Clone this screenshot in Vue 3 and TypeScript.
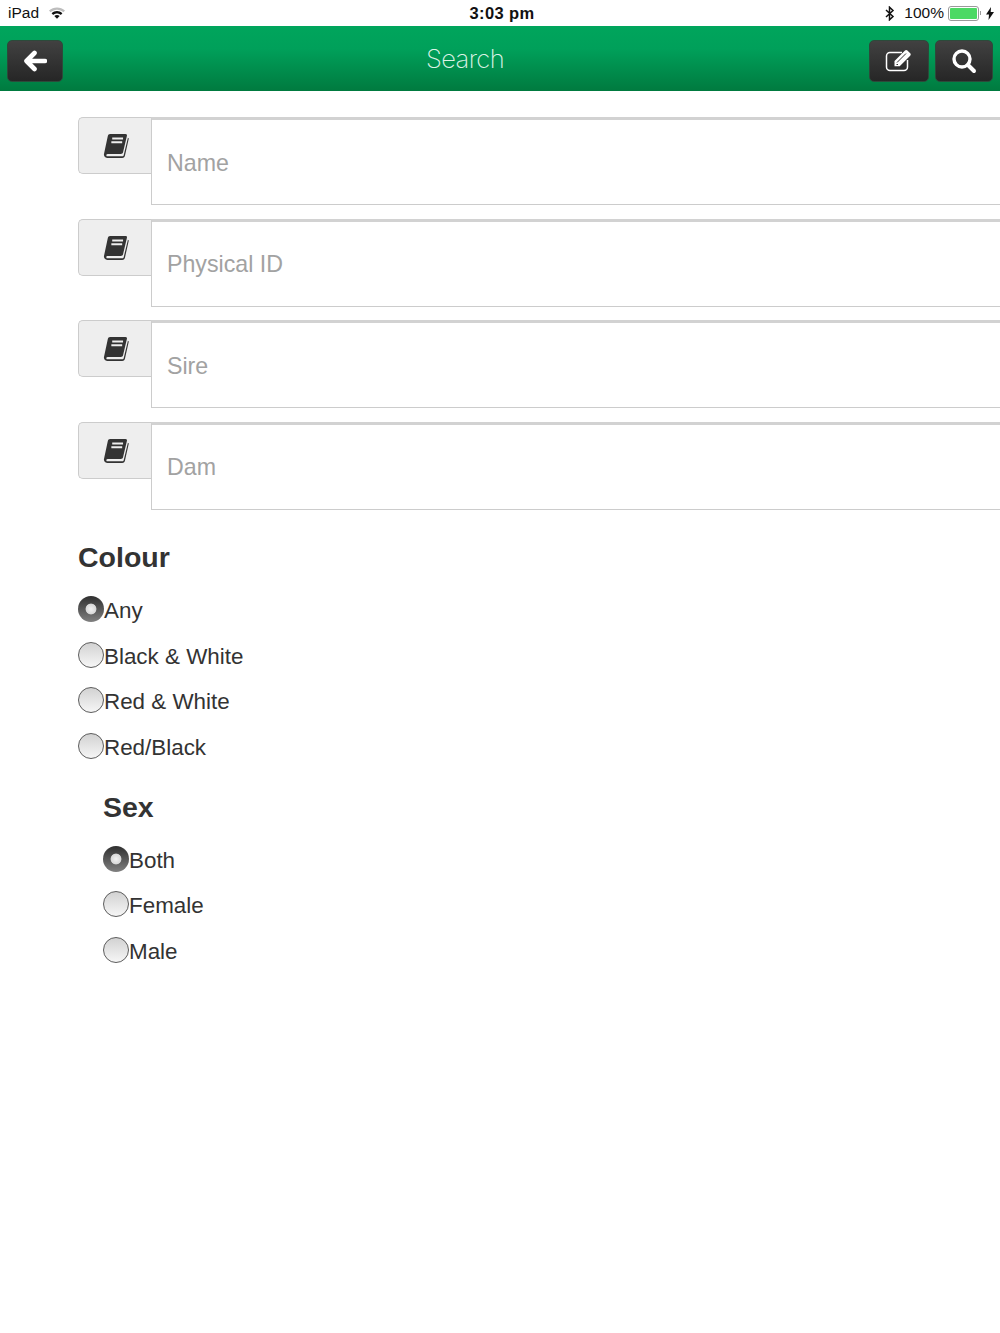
<script setup lang="ts">
const fields = ['Name', 'Physical ID', 'Sire', 'Dam']
const colours = ['Any', 'Black & White', 'Red & White', 'Red/Black']
const sexes = ['Both', 'Female', 'Male']
</script>

<template>
  <div class="page">
    <div class="status">
      <div class="status__side">
        <span>iPad</span>
        <svg class="wifi" width="18" height="14" viewBox="0 0 18 14">
          <path d="M1 4.600C5.500.4 12.500.4 17 4.600l-1.600 1.700C11.700 2.900 6.300 2.900 2.600 6.300z" fill="#bdbdbd" />
          <path d="M3.600 7.200c3.100-2.800 7.700-2.800 10.800 0l-1.600 1.700c-2.200-2-5.400-2-7.600 0z" fill="#111" />
          <path d="M6.300 9.900c1.600-1.300 3.800-1.300 5.400 0L9 12.800z" fill="#111" />
        </svg>
      </div>
      <span class="status__time">3:03 pm</span>
      <div class="status__side status__side--right">
        <svg width="10" height="15" viewBox="0 0 10 15" fill="none" stroke="#111" stroke-width="1.500">
          <path d="M1 4l7 6.500-3.500 3.300V1.200L8 4.500 1 11" />
        </svg>
        <span class="status__pct">100%</span>
        <span class="battery"><span class="battery__fill"></span></span>
        <span class="battery__tip"></span>
        <svg class="bolt" width="8" height="13" viewBox="0 0 8 13">
          <path d="M5 0L0 7.500h3L2.500 13 8 5H4.700z" fill="#111" />
        </svg>
      </div>
    </div>

    <header class="navbar">
      <button class="nav-btn nav-btn--back" type="button" aria-label="Back">
        <svg width="24" height="22" viewBox="0 0 24 22" fill="none" stroke="#fff" stroke-width="4.600" stroke-linecap="round" stroke-linejoin="round">
          <path d="M11.500 3L3.500 11l8 8M4 11h18" />
        </svg>
      </button>
      <h1 class="navbar__title">Search</h1>
      <div class="navbar__actions">
        <button class="nav-btn nav-btn--edit" type="button" aria-label="Edit">
          <svg class="edit-icon" width="28" height="24" viewBox="0 0 28 24" fill="none">
            <path d="M17 4.500H5a3.500 3.500 0 0 0-3.500 3.500v11a3.500 3.500 0 0 0 3.500 3.500h14a3.500 3.500 0 0 0 3.500-3.500v-7" stroke="#fff" stroke-width="1.500" />
            <path d="M9.500 13L20 2.500c.7-.7 1.700-.7 2.400 0l2.800 2.800c.7.700.7 1.700 0 2.400L14.700 18.200H9.500z" fill="#fff" />
            <path d="M12 14.500L21 5.500M11.500 16.500h1.500" stroke="#333" stroke-width="1" />
          </svg>
        </button>
        <button class="nav-btn nav-btn--search" type="button" aria-label="Search">
          <svg width="26" height="26" viewBox="0 0 26 26" fill="none" stroke="#fff" stroke-linecap="round">
            <circle cx="11" cy="11" r="8" stroke-width="3.400" />
            <path d="M17 17l6 6" stroke-width="4" />
          </svg>
        </button>
      </div>
    </header>

    <main class="content">
      <div v-for="field in fields" :key="field" class="input-group">
        <span class="input-group__addon">
          <svg width="26" height="26" viewBox="0 0 24 24">
            <path d="M6.500 1h14.300c1 0 1.500.7 1.300 1.600l-3.600 15.200c-.2.900-1 1.600-2 1.600H4.300c-.9 0-1.400.7-1.200 1.300.1.500.6.800 1.200.8h13.500c.6 0 1.100-.4 1.300-1L23 4.400l.8.700-3.600 16.100c-.3 1.100-1.300 1.800-2.400 1.800H4c-2.200 0-3.600-2-3-4L4.400 3c.3-1.200 1-2 2.100-2z" fill="#333" />
            <path d="M8.500 5h10M7.700 8.500h10" stroke="#eee" stroke-width="1.800" />
          </svg>
        </span>
        <input class="input-group__field" type="text" :placeholder="field" />
      </div>

      <h2 class="group-title">Colour</h2>
      <label v-for="(colour, i) in colours" :key="colour" class="radio">
        <span class="radio__dot" :class="{ 'radio__dot--on': i === 0 }"></span>{{ colour }}
      </label>

      <section class="sex-group">
        <h2 class="group-title">Sex</h2>
        <label v-for="(sex, i) in sexes" :key="sex" class="radio">
          <span class="radio__dot" :class="{ 'radio__dot--on': i === 0 }"></span>{{ sex }}
        </label>
      </section>
    </main>
  </div>
</template>

<style>
html, body {
  margin: 0;
  background: #fff;
  overflow-x: hidden;
}
</style>

<style scoped>
.page {
  width: 1000px;
  height: 1333px;
  overflow: hidden;
  background: #fff;
  font-family: "Liberation Sans", Arial, sans-serif;
  color: #333;
}

.status {
  display: flex;
  align-items: center;
  justify-content: space-between;
  height: 26px;
  padding: 0 6px 0 8px;
  box-sizing: border-box;
  color: #111;
  font-size: 15.500px;
  position: relative;
}

.status__side {
  display: flex;
  align-items: center;
  gap: 9px;
}

.status__side--right {
  gap: 0;
}

.status__time {
  position: absolute;
  left: 0;
  right: 0;
  text-align: center;
  font-size: 16.500px;
  font-weight: 700;
  letter-spacing: 0.4px;
  padding-left: 4px;
}

.status__pct {
  margin-left: 9px;
  margin-right: 4px;
}

.battery {
  display: block;
  width: 31px;
  height: 15px;
  box-sizing: border-box;
  border: 1px solid #9a9a9a;
  border-radius: 3px;
  padding: 1px;
}

.battery__fill {
  display: block;
  height: 100%;
  background: #4cd964;
  border-radius: 1px;
}

.battery__tip {
  width: 1px;
  height: 4px;
  margin-left: 1px;
  background: #9a9a9a;
}

.bolt {
  margin-left: 5px;
}

.navbar {
  display: flex;
  align-items: center;
  justify-content: space-between;
  height: 65px;
  padding: 5px 7px 0;
  box-sizing: border-box;
  background: linear-gradient(#00a55c 0%, #00a05a 35%, #007a3f 100%);
  position: relative;
}

.navbar__title {
  position: absolute;
  left: 0;
  width: 930px;
  margin: 0;
  text-align: center;
  color: #dcf3e6;
  font: 200 25.500px/1 Inter, "Liberation Sans", sans-serif;
  letter-spacing: -0.6px;
  top: 20px;
}

.navbar__actions {
  display: flex;
  gap: 6px;
}

.nav-btn {
  display: flex;
  align-items: center;
  justify-content: center;
  height: 42px;
  padding: 0;
  box-sizing: border-box;
  border: 1px solid #2c4a3a;
  border-radius: 5px;
  background: linear-gradient(#414141, #262626);
}

.nav-btn--back {
  width: 56px;
}

.nav-btn--edit {
  width: 60px;
}

.nav-btn--search {
  width: 58px;
}

.edit-icon {
  margin-top: -3px;
}

.content {
  padding: 26px 0 0 78px;
}

.input-group {
  display: flex;
  align-items: flex-start;
  margin-bottom: 13.500px;
}

.input-group__addon {
  display: flex;
  flex: 0 0 73px;
  align-items: center;
  justify-content: center;
  height: 57px;
  padding: 1px 0 0 2px;
  box-sizing: border-box;
  border: 1px solid #ccc;
  border-right: 0;
  border-radius: 5px 0 0 5px;
  background: #eee;
}

.input-group__field {
  flex: 0 0 870px;
  height: 88px;
  box-sizing: border-box;
  padding: 2px 15px 0;
  border: 1px solid #ccc;
  border-top: 3px solid #d2d2d2;
  border-radius: 0;
  outline: 0;
  font: 23.200px "Liberation Sans", Arial, sans-serif;
  color: #333;
}

.input-group__field::placeholder {
  color: #a2a2a2;
  opacity: 1;
}

.group-title {
  margin: 31px 0 24.500px;
  font-size: 28.500px;
  line-height: 32px;
  font-weight: 700;
  color: #333;
}

.radio {
  display: flex;
  align-items: center;
  height: 28px;
  margin-bottom: 17.600px;
  font-size: 22.400px;
  color: #333;
}

.radio__dot {
  width: 26px;
  height: 26px;
  box-sizing: border-box;
  border: 1.500px solid #5c5c5c;
  border-radius: 50%;
  background: linear-gradient(#d2d2d2, #f6f6f6);
  margin-top: -4px;
}

.radio__dot--on {
  border: 0;
  background:
    radial-gradient(circle at 50% 50%, #f2f2f2 0, #d8d8d8 5px, transparent 5.800px),
    linear-gradient(#2f2f2f, #808080);
}

.sex-group {
  padding-left: 25px;
}

.sex-group .group-title {
  margin: 29.500px 0 23.500px;
}
</style>
